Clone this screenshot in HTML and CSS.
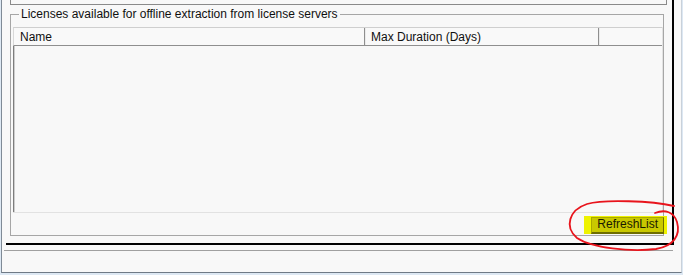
FILE: index.html
```html
<!DOCTYPE html>
<html lang="en">
<head>
    <meta charset="UTF-8">
    <title>Offline Licenses</title>
    <link rel="stylesheet" href="styles.css">
</head>
<body>
    <div class="window">
        <div class="frame">
            <div class="top-box"></div>
            <fieldset class="group">
                <legend>Licenses available for offline extraction from license servers</legend>
                <div class="listview">
                    <div class="lv-header">
                        <div class="lv-col col-name">Name</div>
                        <div class="lv-col col-duration">Max Duration (Days)</div>
                        <div class="lv-col col-rest"></div>
                    </div>
                    <div class="lv-body"></div>
                </div>
                <div class="button-row">
                    <span class="highlight">
                        <button class="refresh-btn">RefreshList</button>
                    </span>
                </div>
            </fieldset>
        </div>
        <div class="separator"></div>
    </div>

    <!-- hand-drawn annotation on top of the screenshot -->
    <svg class="scribble" width="683" height="275" viewBox="0 0 683 275">
        <path d="M674 206 C652 201 604 199 587 204 C569 210 564 227 577 238 C592 248 630 252 656 249 C673 246 681 236 677 222 C674 212 665 209 655 213"
              fill="none" stroke="#e8141c" stroke-width="1.8" stroke-linecap="round"/>
    </svg>
</body>
</html>
```

FILE: styles.css
```css
* {
    box-sizing: border-box;
}
body {
    margin: 0;
    background: #dde8f3;
    font-family: "Liberation Sans", Arial, sans-serif;
    font-size: 12px;
    color: #101010;
    position: relative;
    height: 275px;
    overflow: hidden;
}
.window {
    margin-left: 1px;
    width: 681px;
    height: 273px;
    background: #f8f8f8;
    border-left: 1px solid #7f8a96;
    border-right: 1px solid #c9d1da;
    border-bottom: 1px solid #6f7a86;
}
.frame {
    margin-left: 4px;
    width: 668px;
    height: 245px;
    padding-right: 2px;
    border-right: 2px solid #000;
    border-bottom: 2px solid #000;
}
.top-box {
    margin-left: 4px;
    width: 657px;
    height: 5px;
    border: 1px solid #8a8a8a;
    border-top: none;
}
.group {
    margin: 1px 0 0 4px;
    width: 654px;
    height: 230px;
    padding: 0 0 0 2px;
    border: 1px solid #a6a6a6;
    display: flex;
    flex-direction: column;
}
.group legend {
    margin-left: 6px;
    padding: 0 2px;
    line-height: 16px;
}
.listview {
    margin-top: 5px;
    height: 186px;
    display: flex;
    flex-direction: column;
    border-right: 1px solid #e2e2e2;
    border-bottom: 1px solid #e2e2e2;
}
.lv-header {
    display: flex;
    height: 19px;
    border-top: 1px solid #cfcfcf;
    border-left: 1px solid #d8d8d8;
    border-bottom: 1px solid #8f8f8f;
    background: #f9f9f9;
}
.lv-col {
    padding-top: 2px;
    line-height: 15px;
    border-right: 1px solid #8f8f8f;
    border-left: 1px solid #ebebeb;
}
.col-name {
    width: 351px;
    padding-left: 6px;
    border-left: none;
}
.col-duration {
    width: 234px;
    padding-left: 5px;
}
.col-rest {
    flex: 1;
    border-right: none;
}
.lv-body {
    flex: 1;
    border-left: 1px solid #7d7d7d;
    box-shadow: inset 1px 0 0 #cdcdcd;
}
.button-row {
    flex: 1;
    display: flex;
    justify-content: flex-end;
    align-items: center;
    padding-top: 1px;
}
.highlight {
    display: flex;
    padding: 1px 3px 0 7px;
    margin-right: -4px;
    background: #eef200;
}
.refresh-btn {
    font: inherit;
    color: #1a1a00;
    height: 17px;
    padding: 0 5px;
    background: #c9c800;
    border: 1px solid #a9a800;
    border-right-color: #6e6d00;
    border-bottom: 2px solid #6e6d00;
    line-height: 13px;
}
.separator {
    margin: 5px 0 0 2px;
    width: 669px;
    border-top: 1px solid #a0a0a0;
}
.scribble {
    position: absolute;
    left: 0;
    top: 0;
    pointer-events: none;
}
```
